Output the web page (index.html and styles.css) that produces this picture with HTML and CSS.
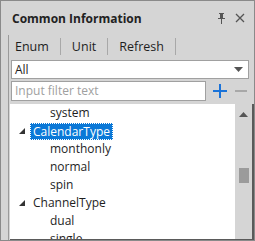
FILE: index.html
```html
<!DOCTYPE html>
<html>
<head>
<meta charset="utf-8">
<link rel="stylesheet" href="styles.css">
</head>
<body>
<div class="panel">
  <div class="titlebar">
    <span class="title">Common Information</span>
    <span class="title-icons">
      <svg class="pin" width="9" height="11" viewBox="0 0 9 11"><path d="M2 0h5v1H6v4h2v1H5v5H4V6H1V5h2V1H2z" fill="#555"/></svg>
      <svg class="close" width="10" height="10" viewBox="0 0 10 10"><path d="M1 1L9 9M9 1L1 9" stroke="#555" stroke-width="1.3"/></svg>
    </span>
  </div>
  <div class="content">
    <div class="tabs">
      <span class="tab">Enum</span><span class="sep"></span>
      <span class="tab">Unit</span><span class="sep"></span>
      <span class="tab">Refresh</span><span class="sep"></span>
    </div>
    <div class="combo">
      <span class="combo-text">All</span>
      <svg class="combo-arrow" width="9" height="5" viewBox="0 0 9 5"><path d="M0 0h9L4.5 5z" fill="#555"/></svg>
    </div>
    <div class="filter-row">
      <div class="filter">Input filter text</div>
      <svg class="plus" width="14" height="14" viewBox="0 0 14 14"><path d="M7 0v14M0 7h14" stroke="#1a73d9" stroke-width="2"/></svg>
      <svg class="minus" width="12" height="2" viewBox="0 0 12 2"><path d="M0 1h12" stroke="#a8a8a8" stroke-width="2"/></svg>
    </div>
    <div class="tree">
      <div class="rows">
        <div class="row leaf">system</div>
        <div class="row parent"><svg class="exp" width="6" height="6" viewBox="0 0 6 6"><path d="M6 0V6H0z" fill="#333"/></svg><span class="sel">CalendarType</span></div>
        <div class="row leaf">monthonly</div>
        <div class="row leaf">normal</div>
        <div class="row leaf">spin</div>
        <div class="row parent"><svg class="exp" width="6" height="6" viewBox="0 0 6 6"><path d="M6 0V6H0z" fill="#333"/></svg><span class="lbl">ChannelType</span></div>
        <div class="row leaf">dual</div>
        <div class="row leaf">single</div>
      </div>
      <div class="scrollbar">
        <svg class="up" width="9" height="5" viewBox="0 0 9 5"><path d="M4.5 0L9 5H0z" fill="#555"/></svg>
        <div class="thumb"></div>
      </div>
    </div>
  </div>
</div>
</body>
</html>
```

FILE: styles.css
```css
* { box-sizing: border-box; }
html, body { margin: 0; padding: 0; }
body {
  width: 255px;
  height: 241px;
  overflow: hidden;
  font-family: "Open Sans", "Noto Sans", sans-serif;
  font-size: 12px;
  color: #1e1e1e;
}
.panel {
  width: 255px;
  height: 241px;
  background: #d5d5d5;
  border: 1px solid #8a8a8a;
  display: flex;
  flex-direction: column;
}
.titlebar {
  height: 34px;
  display: flex;
  align-items: center;
  padding: 0 9px 0 11px;
}
.title {
  font-weight: bold;
  font-size: 12px;
  flex: 1;
  color: #222;
}
.title-icons {
  display: flex;
  align-items: center;
  gap: 9px;
}
.content {
  flex: 1;
  display: flex;
  flex-direction: column;
  margin-left: 7px;
  border-left: 1px solid #9a9a9a;
  min-height: 0;
}
.tabs {
  height: 22px;
  display: flex;
  align-items: center;
  padding-left: 6px;
  font-size: 12.5px;
}
.sep {
  width: 1px;
  height: 17px;
  background: #a8a8a8;
  margin: 0 11px;
}
.combo {
  margin: 3px 5px 0 2px;
  height: 19px;
  background: #fff;
  border: 1px solid #a0a0a0;
  display: flex;
  align-items: center;
  padding: 0 5px 0 3px;
}
.combo-text { flex: 1; }
.filter-row {
  display: flex;
  align-items: center;
  margin: 2px 5px 0 2px;
  height: 20px;
}
.filter {
  width: 195px;
  height: 20px;
  background: #fff;
  border: 1px solid #a0a0a0;
  color: #a0a0a0;
  padding-left: 3px;
  line-height: 18px;
}
.plus { margin-left: 7px; }
.minus { margin-left: 8px; }
.tree {
  flex: 1;
  display: flex;
  margin: 3px 0 0 1px;
  min-height: 0;
  border-right: 2px solid #5a5a5a;
  border-bottom: 1px solid #5a5a5a;
}
.rows {
  flex: 1;
  background: #fff;
  padding-top: 0;
  overflow: hidden;
}
.row {
  height: 18px;
  line-height: 18px;
  white-space: nowrap;
  display: flex;
  align-items: center;
}
.leaf { padding-left: 40px; }
.parent { padding-left: 9px; }
.exp { margin-right: 8px; }
.sel {
  background: #0a78d7;
  color: #fff;
  outline: 1px dotted #fff;
  outline-offset: -1px;
  padding: 0 3px;
  margin-left: -3px;
  line-height: 17px;
}
.scrollbar {
  width: 17px;
  background: #d5d5d5;
  display: flex;
  flex-direction: column;
  align-items: center;
  padding-top: 8px;
}
.thumb {
  width: 10px;
  height: 15px;
  background: #9b9b9b;
  margin-top: 51px;
}
```
